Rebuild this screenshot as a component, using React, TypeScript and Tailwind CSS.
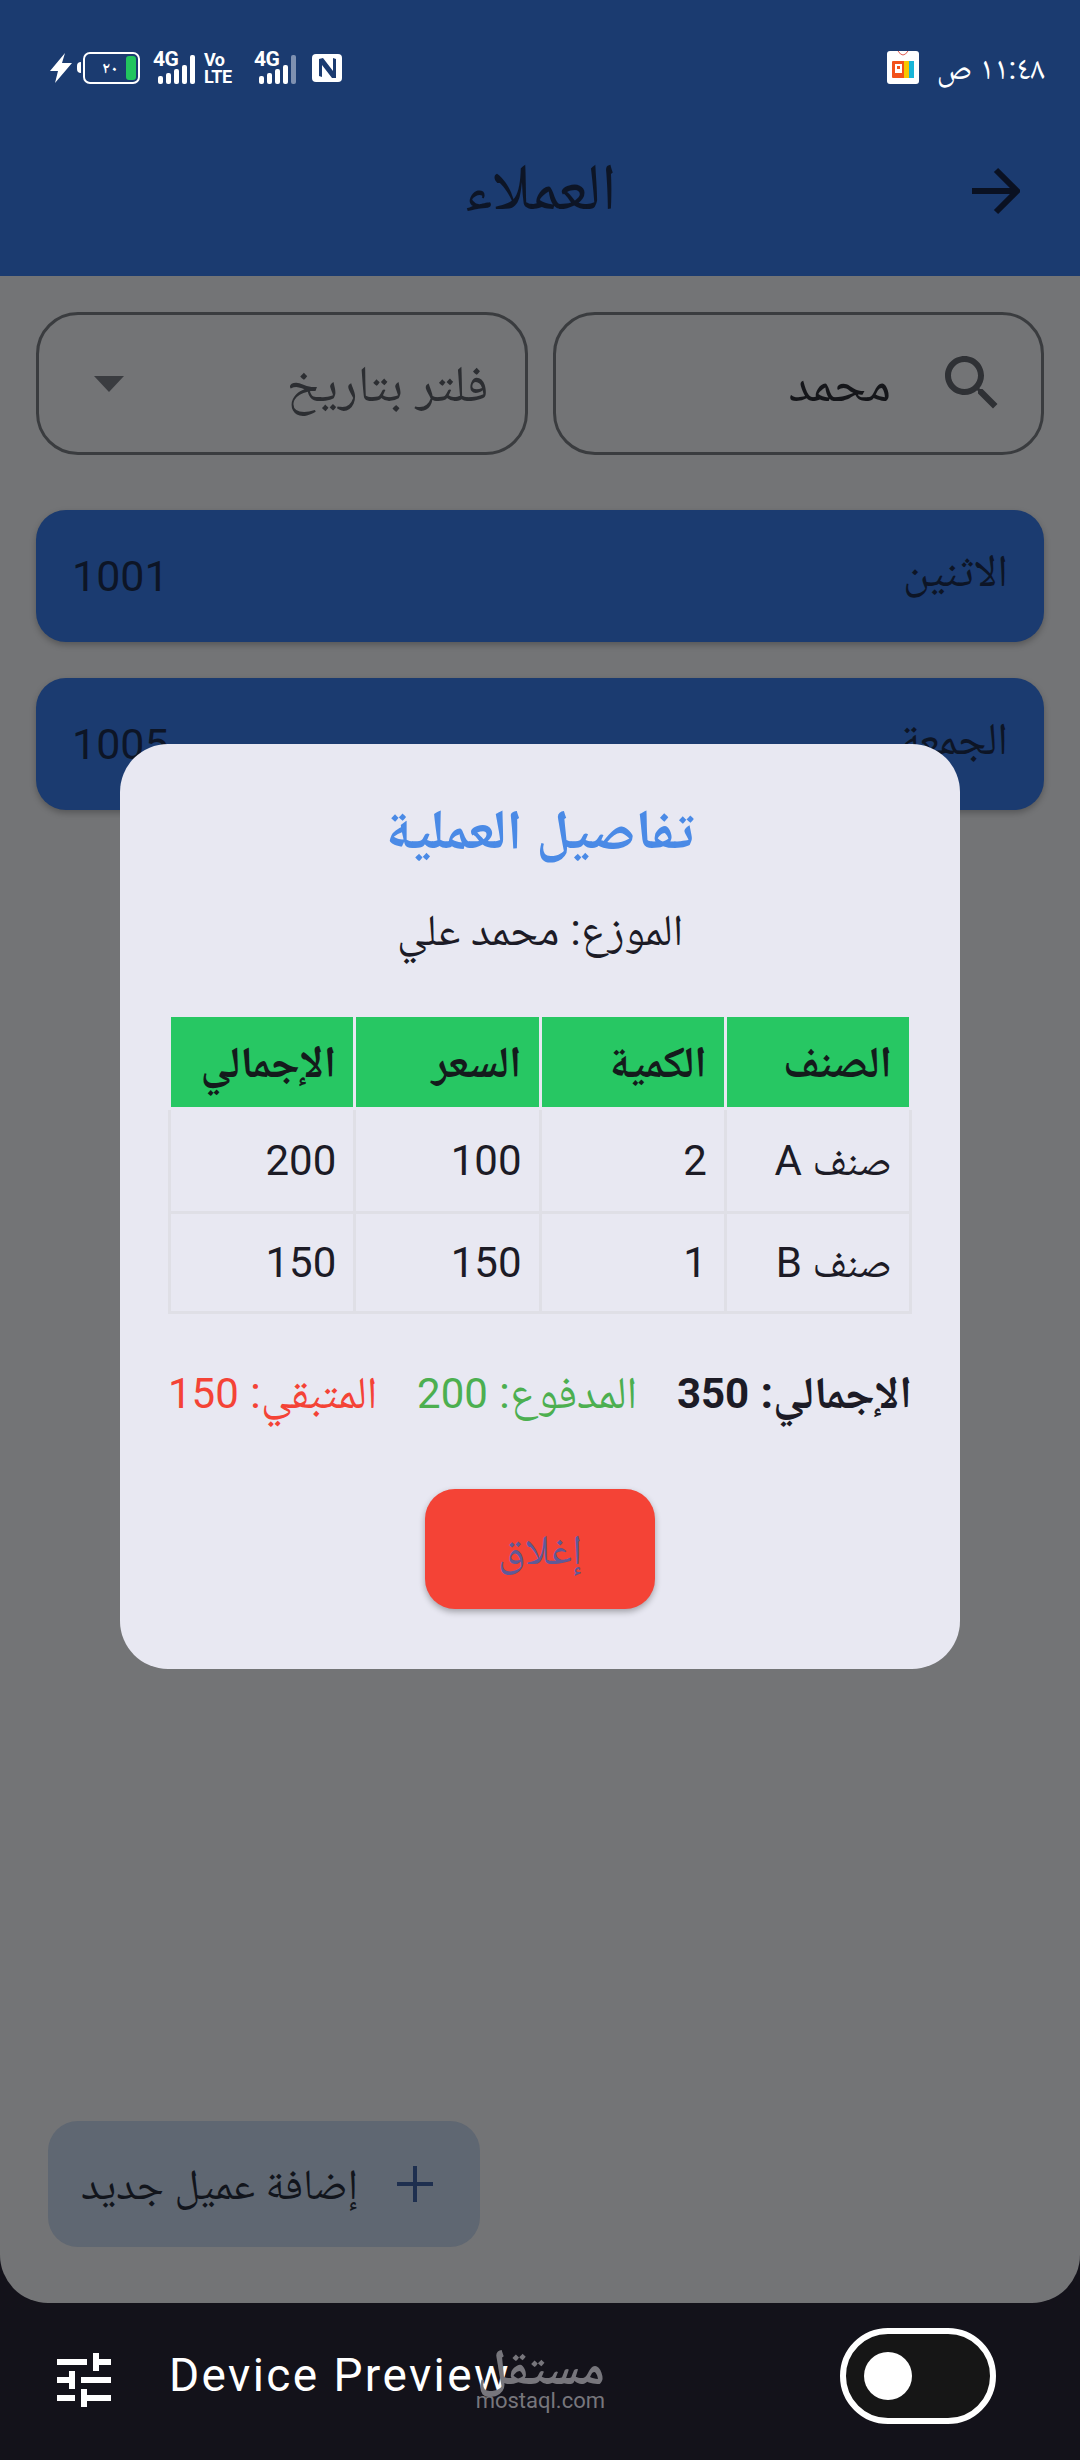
import React from "react";

const ink = "text-[#0d1526]";

function Signal({ dim }: { dim?: boolean }) {
  const hs = [8, 11, 15, 19, 29];
  return (
    <svg width="40" height="30" viewBox="0 0 40 30" className="absolute bottom-0 left-[5px]">
      {hs.map((h, i) => (
        <rect key={i} x={i * 8} y={30 - h} width="5" height={h} rx="2" fill={dim && i === 4 ? "#7f91b1" : "#ffffff"} />
      ))}
    </svg>
  );
}

function Net({ dim }: { dim?: boolean }) {
  return (
    <div className="relative w-[44px] h-[32px]">
      <span className="absolute left-0 top-[-4px] text-[21px] leading-[22px] font-bold text-white tracking-[-0.5px]">4G</span>
      <Signal dim={dim} />
    </div>
  );
}

function StatusBar() {
  return (
    <div dir="ltr" className="flex items-center justify-between pl-[50px] pr-[35px] pt-[51px] h-[84px]">
      <div className="flex items-center">
        <svg width="22" height="30" viewBox="0 0 22 30">
          <path d="M15 0 L0 18 L8 18 L5 30 L22 10 L12 10 Z" fill="#fff" />
        </svg>
        <div className="ml-[5px] w-[4px] h-[11px] bg-white rounded-l-sm" />
        <div dir="rtl" className="ml-[2px] w-[57px] h-[32px] rounded-[7px] border-2 border-white flex items-center gap-[8px] px-[2px]">
          <div className="w-[10px] h-[24px] bg-[#22c55e] rounded-[3px]" />
          <span className="text-white text-[16px] font-bold leading-none">٢٠</span>
        </div>
        <div className="ml-[13px]"><Net /></div>
        <div className="ml-[7px] w-[32px] flex flex-col text-white font-bold text-[18px] leading-[17px] tracking-[-0.5px]">
          <span>Vo</span>
          <span>LTE</span>
        </div>
        <div className="ml-[18px]"><Net dim /></div>
        <svg className="ml-[14px]" width="30" height="28" viewBox="0 0 30 28">
          <rect width="30" height="28" rx="4" fill="#fff" />
          <path d="M7 5 L11 4 L21 17 L21 4 L24 5 L24 24 L20 24 L10 11 L10 23 L7 22 Z" fill="#1b3b70" />
        </svg>
      </div>
      <div className="flex items-center">
        <svg width="32" height="33" viewBox="0 0 32 33">
          <rect width="32" height="33" rx="3" fill="#fff" />
          <path d="M11 0 Q16 8 21 0" fill="none" stroke="#e05a50" strokeWidth="1" />
          <rect x="5" y="10" width="13" height="17" rx="1" fill="#f2511b" />
          <rect x="17" y="10" width="5" height="17" fill="#f7c600" />
          <rect x="22" y="10" width="5" height="17" fill="#18b5d8" />
          <rect x="8" y="13" width="7" height="9" fill="#fff" />
          <rect x="10" y="15" width="3" height="3" fill="#f2511b" />
        </svg>
        <span dir="rtl" className="ml-[18px] text-white text-[32px] leading-[32px]">١١:٤٨ ص</span>
      </div>
    </div>
  );
}

function Header() {
  return (
    <div className="h-[276px] shrink-0 bg-[#1b3b70]">
      <StatusBar />
      <div dir="rtl" className="relative flex items-center justify-center h-[110px] mt-[50px]">
        <span className={`text-[66px] leading-none -mt-[4px] ${ink}`}>العملاء</span>
        <svg className="absolute right-[60px] top-[33px]" width="48" height="48" viewBox="0 0 48 48">
          <path d="M0 24 H44 M24 3 L45 24 L24 45" fill="none" stroke="#0a1122" strokeWidth="6" />
        </svg>
      </div>
    </div>
  );
}

function Filters() {
  return (
    <div dir="rtl" className="grid grid-cols-2 gap-[25px] px-[36px] mt-[36px]">
      <div className="h-[143px] rounded-[42px] border-[3px] border-[#3a3c3f] flex items-center pr-[42px]">
        <svg width="72" height="72" viewBox="0 0 24 24" className="shrink-0 -mr-[9px] -mt-[2px]" fill="#2f3135">
          <path d="M15.5 14h-.79l-.28-.27C15.41 12.59 16 11.11 16 9.5 16 5.91 13.09 3 9.5 3S3 5.91 3 9.5 5.91 16 9.5 16c1.61 0 3.09-.59 4.23-1.57l.27.28v.79l5 4.99L20.49 19l-4.99-5zm-6 0C7.01 14 5 11.99 5 9.5S7.01 5 9.5 5 14 7.01 14 9.5 11.99 14 9.5 14z" />
        </svg>
        <span className="mr-[45px] text-[51px] leading-none text-[#15161a]">محمد</span>
      </div>
      <div className="h-[143px] rounded-[42px] border-[3px] border-[#3a3c3f] flex items-center justify-between pr-[36px] pl-[55px]">
        <span className="text-[51px] leading-none text-[#2c2e32]">فلتر بتاريخ</span>
        <svg width="30" height="16" viewBox="0 0 30 16"><path d="M0 0 H30 L15 16 Z" fill="#3a3c40" /></svg>
      </div>
    </div>
  );
}

function Card({ day, id }: { day: string; id: string }) {
  return (
    <div dir="rtl" className={`h-[132px] rounded-[30px] bg-[#1b3b70] shadow-[0_3px_6px_rgba(0,0,0,0.25)] flex items-center justify-between px-[36px] ${ink}`}>
      <span className="text-[45px] leading-none -mt-[12px]">{day}</span>
      <span className="text-[43px] leading-none">{id}</span>
    </div>
  );
}

const th = "border-[3px] border-[#e8e8f2] bg-[#27c763] h-[93px] px-[17px] text-right text-[44px] font-bold text-[#141b1c]";
const td = "border-[3px] border-[#dfdfe6] px-[17px] text-right text-[42px] text-[#1c1b26]";

function Dialog() {
  return (
    <div dir="rtl" className="absolute left-[120px] top-[744px] w-[840px] h-[925px] rounded-[48px] bg-[#e8e8f2] flex flex-col items-center px-[48px]">
      <h2 className="mt-[56px] text-[56px] leading-[60px] font-bold text-[#4a8ae6]">تفاصيل العملية</h2>
      <p className="mt-[42px] text-[44px] leading-[56px] text-[#1c1b26]">الموزع: محمد علي</p>
      <table className="mt-[56px] w-full table-fixed border-collapse">
        <thead>
          <tr>
            {["الصنف", "الكمية", "السعر", "الإجمالي"].map((h) => (
              <th key={h} className={th}>{h}</th>
            ))}
          </tr>
        </thead>
        <tbody>
          <tr className="h-[104px]"><td className={td}>صنف A</td><td className={td}>2</td><td className={td}>100</td><td className={td}>200</td></tr>
          <tr className="h-[100px]"><td className={td}>صنف B</td><td className={td}>1</td><td className={td}>150</td><td className={td}>150</td></tr>
        </tbody>
      </table>
      <div className="mt-[54px] w-full flex items-center justify-between text-[45px] leading-[50px]">
        <span className="font-bold text-[#1c1b26]">الإجمالي: <span className="text-[42px]">350</span></span>
        <span className="text-[#4caf50]">المدفوع: <span className="text-[42px]">200</span></span>
        <span className="text-[#f44336]">المتبقي: <span className="text-[42px]">150</span></span>
      </div>
      <button className="mt-[70px] w-[230px] h-[120px] rounded-[30px] bg-[#f44336] shadow-[0_3px_6px_rgba(0,0,0,0.3)] text-[42px] text-[#5f5a98]">إغلاق</button>
    </div>
  );
}

function Fab() {
  return (
    <div className="mt-auto mb-[56px] ml-[48px] w-[432px] h-[126px] rounded-[30px] bg-[#5f6772] flex items-center gap-[39px] pr-[47px]" dir="rtl">
      <svg width="36" height="36" viewBox="0 0 36 36"><path d="M18 0 V36 M0 18 H36" stroke="#1e2f4f" strokeWidth="4" fill="none" /></svg>
      <span className="text-[43px] leading-none text-[#12151c]">إضافة عميل جديد</span>
    </div>
  );
}

function BottomBar() {
  return (
    <div dir="ltr" className="relative flex-1 flex items-center pl-[48px] pr-[84px] bg-[#13121a]">
      <svg width="72" height="72" viewBox="0 0 24 24" fill="#fff" className="shrink-0 -mt-[3px]">
        <path d="M3 17v2h6v-2H3zM3 5v2h10V5H3zm10 16v-2h8v-2h-8v-2h-2v6h2zM7 9v2H3v2h4v2h2V9H7zm14 4v-2H11v2h10zm-6-4h2V7h4V5h-4V3h-2v6z" />
      </svg>
      <span className="ml-[49px] mb-[14px] text-[46px] leading-none text-white tracking-[2.4px]">Device Preview</span>
      <div className="ml-auto w-[156px] h-[96px] rounded-[48px] border-[6px] border-white bg-[#161616] flex items-center pl-[18px] -mt-[12px]">
        <div className="w-[48px] h-[48px] rounded-full bg-white" />
      </div>
      <div className="absolute left-[473px] top-[41px] w-[132px] flex flex-col items-end text-[#77767c]">
        <span className="text-[50px] leading-[46px] font-bold">مستقل</span>
        <span className="text-[22px] leading-[22px]">mostaql.com</span>
      </div>
    </div>
  );
}

export default function App() {
  return (
    <div className="relative w-[1080px] h-[2460px] overflow-hidden flex flex-col bg-[#13121a] font-['Roboto','Noto_Naskh_Arabic',sans-serif]">
      <div className="h-[2303px] shrink-0 flex flex-col bg-[#737476] rounded-b-[48px] overflow-hidden">
        <Header />
        <Filters />
        <div className="flex flex-col gap-[36px] px-[36px] mt-[55px]">
          <Card day="الاثنين" id="1001" />
          <Card day="الجمعة" id="1005" />
        </div>
        <Fab />
      </div>
      <BottomBar />
      <Dialog />
    </div>
  );
}
